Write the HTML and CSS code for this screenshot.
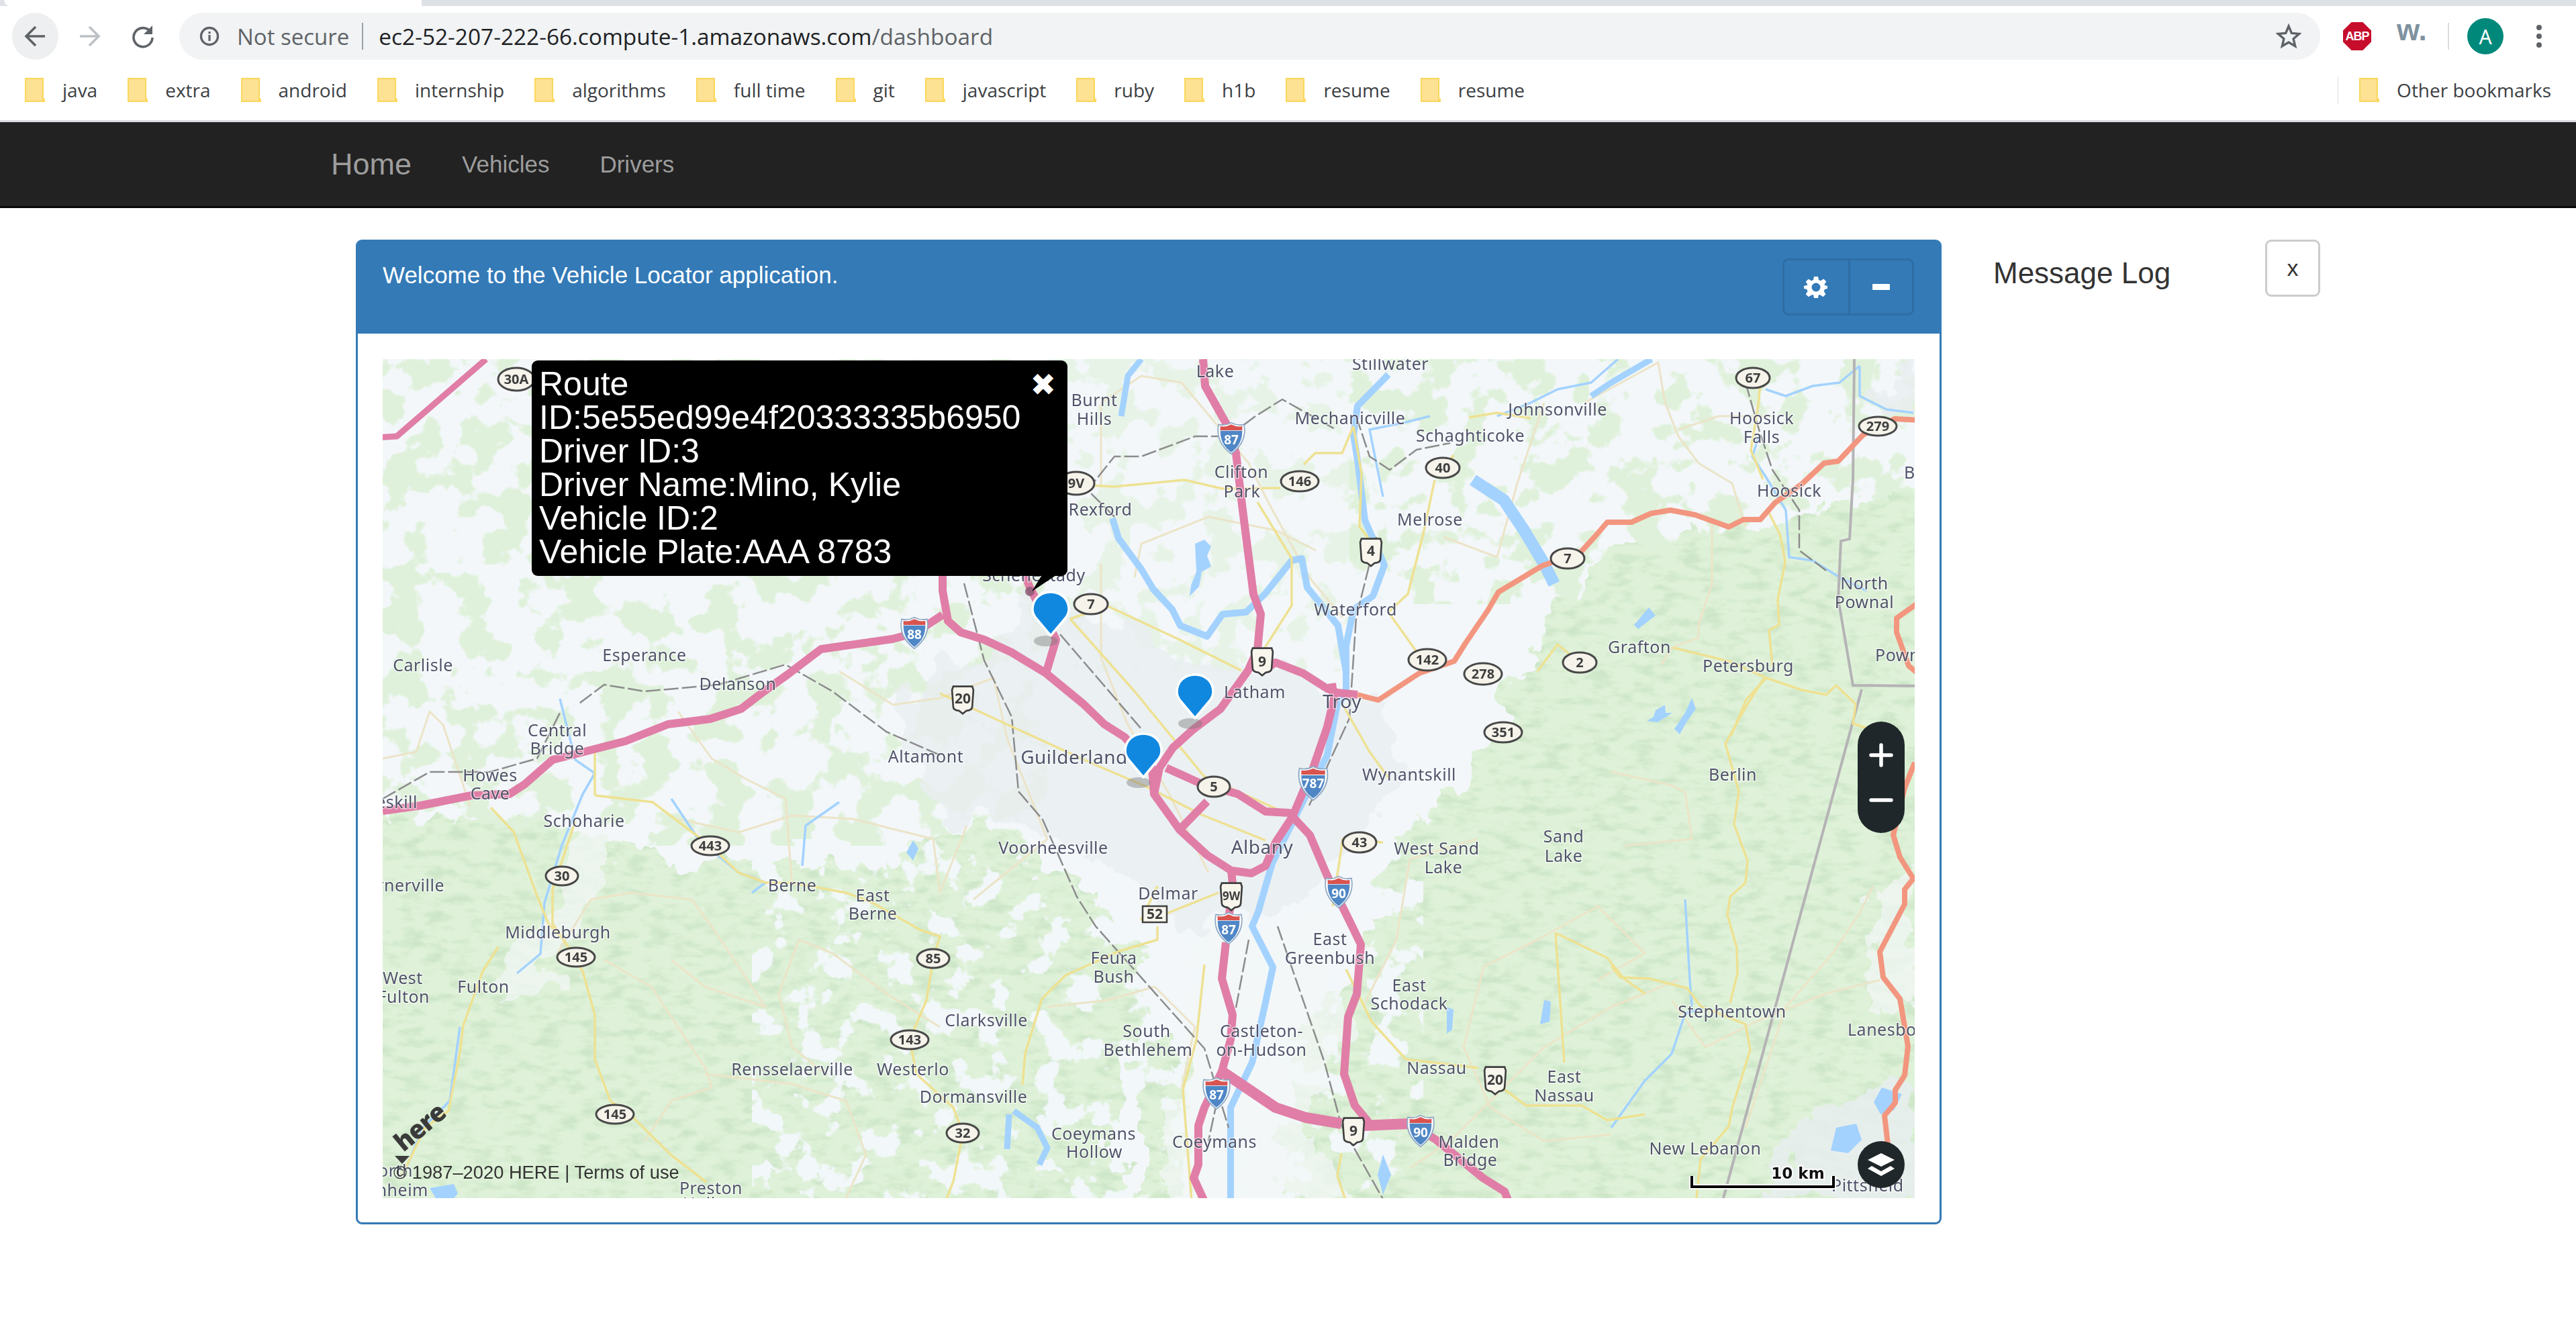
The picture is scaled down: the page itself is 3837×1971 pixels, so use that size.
FILE: index.html
```html
<!DOCTYPE html>
<html lang="en">
<head>
<meta charset="utf-8">
<title>Vehicle Locator</title>
<link rel="stylesheet" href="styles.css">
</head>
<body>
<header class="chrome">
  <div class="tabstrip"><div class="tabstrip-tab"></div><div class="tabstrip-rest"></div></div>
  <div class="toolbar">
    <div class="nav-btn nav-btn-active">
      <svg width="40" height="40" viewBox="0 0 40 40"><path d="M34 20H7M20 6L6 20l14 14" class="ic-stroke"/></svg>
    </div>
    <div class="nav-btn">
      <svg width="40" height="40" viewBox="0 0 40 40"><path d="M6 20h27M20 6l14 14-14 14" class="ic-stroke ic-off"/></svg>
    </div>
    <div class="nav-btn">
      <svg width="40" height="40" viewBox="0 0 40 40"><path d="M31 13A14 14 0 1 0 34 22" class="ic-stroke"/><path d="M34 4v13H21z" class="ic-fill"/></svg>
    </div>
    <div class="omnibox">
      <svg class="info-icon" width="32" height="32" viewBox="0 0 32 32"><circle cx="16" cy="16" r="12.5" class="ic-ring"/><rect x="14.4" y="14" width="3.2" height="9" class="ic-fill"/><rect x="14.4" y="9" width="3.2" height="3.2" class="ic-fill"/></svg>
      <span class="not-secure">Not secure</span>
      <span class="omni-sep"></span>
      <span class="url">ec2-52-207-222-66.compute-1.amazonaws.com<span class="url-path">/dashboard</span></span>
      <svg class="star" width="38" height="38" viewBox="0 0 38 38"><path d="M19 4l4.4 10.4 11.2 1-8.5 7.4 2.6 11L19 28l-9.7 5.8 2.6-11-8.5-7.4 11.2-1z" class="ic-star"/></svg>
    </div>
    <div class="abp"><span>ABP</span></div>
    <div class="wext">w.</div>
    <span class="tool-sep"></span>
    <div class="avatar">A</div>
    <div class="dots"><i></i><i></i><i></i></div>
  </div>
  <div class="bookmarks">
    <a class="bm"><svg class="folder" viewBox="0 0 30 36"><use href="#folder"/></svg>java</a>
    <a class="bm"><svg class="folder" viewBox="0 0 30 36"><use href="#folder"/></svg>extra</a>
    <a class="bm"><svg class="folder" viewBox="0 0 30 36"><use href="#folder"/></svg>android</a>
    <a class="bm"><svg class="folder" viewBox="0 0 30 36"><use href="#folder"/></svg>internship</a>
    <a class="bm"><svg class="folder" viewBox="0 0 30 36"><use href="#folder"/></svg>algorithms</a>
    <a class="bm"><svg class="folder" viewBox="0 0 30 36"><use href="#folder"/></svg>full time</a>
    <a class="bm"><svg class="folder" viewBox="0 0 30 36"><use href="#folder"/></svg>git</a>
    <a class="bm"><svg class="folder" viewBox="0 0 30 36"><use href="#folder"/></svg>javascript</a>
    <a class="bm"><svg class="folder" viewBox="0 0 30 36"><use href="#folder"/></svg>ruby</a>
    <a class="bm"><svg class="folder" viewBox="0 0 30 36"><use href="#folder"/></svg>h1b</a>
    <a class="bm"><svg class="folder" viewBox="0 0 30 36"><use href="#folder"/></svg>resume</a>
    <a class="bm"><svg class="folder" viewBox="0 0 30 36"><use href="#folder"/></svg>resume</a>
    <span class="bm-spacer"></span>
    <span class="bm-sep"></span>
    <a class="bm bm-other"><svg class="folder" viewBox="0 0 30 36"><use href="#folder"/></svg>Other bookmarks</a>
  </div>
</header>

<nav class="navbar">
  <a class="brand">Home</a>
  <a class="nav-link">Vehicles</a>
  <a class="nav-link">Drivers</a>
</nav>

<main class="content">
  <section class="panel">
    <div class="panel-head">
      <div class="panel-title">Welcome to the Vehicle Locator application.</div>
      <div class="btn-group">
        <button class="hbtn hbtn-first">
          <svg width="36" height="36" viewBox="0 0 36 36"><path class="gear" fill-rule="evenodd" d="M15 2h6l1 5 3 1.3 4.300-2.800 4 4-2.800 4.300L31 15l4 1v4l-4 1-1.300 3 2.800 4.300-4 4L25 29.700 22 29l-1 5h-6l-1-5-3 .7-4.300 2.600-4-4L5.500 24 4.300 21 0 20v-4l4.300-1L5.500 14 2.700 9.800l4-4L11 8.300 14 7zM18 11.500a6.500 6.500 0 1 0 0 13 6.500 6.500 0 0 0 0-13z"/></svg>
        </button>
        <button class="hbtn"><span class="minus-bar"></span></button>
      </div>
    </div>
    <div class="panel-body">
      <div class="map">
        <svg class="map-canvas" width="2282" height="1250" viewBox="570 535 2282 1250">
          <defs>
            <symbol id="folder" viewBox="0 0 30 36">
              <path d="M1 1h26v31h3v3H1z" fill="#fde293" stroke="#fbd75b" stroke-width="2"/>
              <path d="M27 27v8" stroke="#fbd75b" stroke-width="2" fill="none"/>
            </symbol>
            <filter id="rough" x="-5%" y="-5%" width="110%" height="110%" color-interpolation-filters="sRGB">
              <feTurbulence type="fractalNoise" baseFrequency="0.018" numOctaves="4" seed="7" result="n"/>
              <feDisplacementMap in="SourceGraphic" in2="n" scale="90" xChannelSelector="R" yChannelSelector="G"/>
            </filter>
            <filter id="patchGreen" x="0" y="0" width="100%" height="100%" color-interpolation-filters="sRGB">
              <feTurbulence type="fractalNoise" baseFrequency="0.019" numOctaves="4" seed="11"/>
              <feColorMatrix values="0 0 0 0 .875  0 0 0 0 .945  0 0 0 0 .855  16 0 0 0 -8.200"/>
              <feComposite in2="SourceAlpha" operator="in"/>
            </filter>
            <filter id="patchWhite" x="0" y="0" width="100%" height="100%" color-interpolation-filters="sRGB">
              <feTurbulence type="fractalNoise" baseFrequency="0.022" numOctaves="4" seed="23"/>
              <feColorMatrix values="0 0 0 0 .95  0 0 0 0 .97  0 0 0 0 .98  16 0 0 0 -9"/>
              <feComposite in2="SourceAlpha" operator="in"/>
            </filter>
            <filter id="hills" x="-5%" y="-5%" width="110%" height="110%" color-interpolation-filters="sRGB">
              <feTurbulence type="fractalNoise" baseFrequency="0.03 0.075" numOctaves="4" seed="3"/>
              <feColorMatrix values="0 0 0 0 .76  0 0 0 0 .87  0 0 0 0 .74  3 0 0 0 -1.350"/>
              <feComposite in2="SourceAlpha" operator="in"/>
            </filter>
            <symbol id="ishield" viewBox="0 0 50 58" overflow="visible">
              <path d="M3 5q11 3 22-3q11 6 22 3q6 30-22 51Q-3 35 3 5z" fill="#fff" stroke="#8fa9c4" stroke-width="2"/>
              <path d="M6 16h38q0 24-19 37Q6 40 6 16z" fill="#4f86c6"/>
              <path d="M6 8q10 2 19-3q9 5 19 3v7H6z" fill="#d9534f"/>
            </symbol>
            <symbol id="ushield" viewBox="0 0 40 52" overflow="visible">
              <path d="M4 3h32l2 6-2 28q0 6-10 7l-6 5-6-5q-10-1-10-7L2 9z" fill="#f7f5ec" stroke="#3f3f3f" stroke-width="3"/>
            </symbol>
            <g id="green-shapes" class="m-green">
              <path d="M500 1225L760 1215 880 1240 1010 1290 1170 1280 1300 1300 1440 1230 1560 1300 1640 1340 1690 1400 1700 1500 1660 1700 1680 1850H500z"/>
              <path d="M2900 715L2630 780 2470 800 2390 820 2320 920 2270 1020 2220 1100 2170 1180 2100 1230 2060 1310 2040 1420 1990 1500 1930 1560 1900 1680 1920 1850H2900z"/>
              <path d="M1700 1540L1760 1560 1780 1850H1700z"/>
              <path d="M500 1120L560 1160 560 1230H500z"/>
            </g>
          </defs>

          <g class="map-base">
            <rect x="570" y="535" width="2282" height="1250" class="m-land"/>
            <path class="m-patchmask" filter="url(#patchGreen)" d="M570 535H1560V1260H570zM2010 535H2852V900H2010z"/>
            <path class="m-patchmask m-sparse" filter="url(#patchGreen)" d="M1560 535H2010V1000H1560z"/>

            <g filter="url(#rough)"><use href="#green-shapes"/></g>
            <g filter="url(#hills)" opacity=".6"><g filter="url(#rough)"><use href="#green-shapes"/></g></g>
            <path class="m-patchmask" filter="url(#patchWhite)" d="M1120 1250H2120V1785H1120z"/>

            <g filter="url(#rough)" class="m-urban">
              <path d="M1330 1040L1480 960 1560 880 1720 960 1880 1000 2060 1040 2100 1170 1990 1280 1950 1340 1780 1390 1650 1290 1540 1240 1440 1225 1350 1150z"/>
              <path d="M2700 1640L2850 1600 2860 1790 2640 1790z"/>
              <path d="M2790 560L2860 540 2860 620 2810 610z"/>
            </g>

            <g class="m-valley" filter="url(#rough)">
              <path d="M850 1220L905 1240 880 1370 800 1470 740 1480 770 1420 840 1340z"/>
              <path d="M1780 1390L1960 1370 2010 1520 1940 1660 2020 1790H1740z"/>
              <path d="M2780 1330L2850 1300 2850 1500 2790 1500z"/>
            </g>

            <g class="m-tan">
              <polyline points="1000,1430 1050,1470 1140,1500 1060,1380 1030,1340 940,1330 880,1340 830,1420"/>
              <polyline points="1440,1230 1400,1330 1390,1250 1270,1220 1180,1215 1100,1240 1010,1220"/>
              <polyline points="1010,1060 1060,1130 1110,1160 1170,1190 1180,1320"/>
              <polyline points="1400,1530 1320,1480 1240,1420 1190,1400 1160,1480 1180,1560 1230,1600"/>
              <polyline points="1050,1600 1180,1615 1260,1640 1290,1720 1260,1785"/>
              <polyline points="900,1430 970,1470 1010,1530 1050,1590 1060,1620 1000,1640 960,1700"/>
              <polyline points="700,1200 660,1080 640,1060 620,1120 570,1130"/>
              <polyline points="1250,1000 1330,1050 1400,1040 1480,1010 1500,1100 1540,1200 1560,1250 1450,1340"/>
              <polyline points="1640,840 1640,980 1680,1080 1740,1180 1800,1300"/>
              <polyline points="1640,725 1640,600 1700,560 1760,570 1860,690 1890,750 1950,860 2000,920"/>
              <polyline points="1690,860 1700,810 1800,770 1900,790 1960,820"/>
              <polyline points="2360,600 2470,540 2480,600 2500,650 2530,690 2580,720 2600,785"/>
              <polyline points="2500,640 2560,620 2640,620"/>
              <polyline points="2550,780 2550,870 2530,930 2530,950 2490,965 2475,990"/>
              <polyline points="2380,1460 2450,1420 2380,1350 2290,1400 2210,1440 2180,1560 2220,1650 2300,1700 2400,1690"/>
              <polyline points="2420,1260 2520,1250 2510,1180 2490,1170 2400,1150"/>
              <polyline points="2600,1680 2660,1500 2730,1420 2770,1360 2790,1320"/>
              <polyline points="2490,1490 2540,1560 2620,1520 2720,1480 2800,1460"/>
              <polyline points="2150,800 2230,830 2260,720 2300,600"/>
              <polyline points="2030,1500 2080,1400 2100,1280 2200,1250"/>
              <polyline points="1560,1500 1650,1490 1720,1470 1780,1530 1760,1620"/>
              <polyline points="2100,1740 2160,1700 2240,1620 2300,1560 2400,1500 2500,1460"/>
            </g>

            <g class="m-river">
              <polyline class="r-wide" points="1657,772 1666,802 1700,848 1718,878 1746,908 1758,932 1798,948 1821,915 1856,912 1884,885 1924,835 1939,832 1947,875 1993,932 2005,1002"/>
              <polyline class="r-wide" points="2068,558 2022,605 2016,648 2022,685 2033,775 2045,802 2062,842 2045,888 2016,908 2005,962 2005,1035 1992,1049 1977,1125 1941,1194 1895,1286 1874,1359 1865,1380 1896,1441 1884,1498 1865,1583 1833,1650 1833,1790"/>
              <polyline class="r-lake" points="2194,715 2240,745 2270,790 2300,840 2315,870"/>
              <polyline class="r-med" points="1510,1655 1545,1680 1560,1710 1548,1735"/>
              <polyline class="r-med" points="1503,1660 1500,1712"/>
              <polyline class="r-thin" points="834,1041 857,1132 886,1152 868,1183 837,1259 811,1345 805,1421 770,1450"/>
              <polyline class="r-thin" points="1000,1190 1040,1250 1100,1300 1140,1315 1120,1330"/>
              <polyline class="r-thin" points="1250,1195 1200,1230 1195,1290"/>
              <polyline class="r-thin" points="685,1530 670,1640 630,1680 605,1740"/>
              <polyline class="r-thin" points="2400,1680 2450,1610 2490,1570 2510,1510 2540,1500"/>
              <polyline class="r-thin" points="2510,1340 2517,1460 2520,1500"/>
              <polyline class="r-thin" points="2620,650 2610,680 2630,710 2660,760 2665,830 2700,835 2740,860 2780,880"/>
              <polyline class="r-thin" points="2630,580 2660,590 2700,575 2740,570 2770,545"/>
              <polyline class="r-thin" points="2770,545 2770,590 2810,610 2850,615"/>
              <polyline class="r-thin" points="2060,740 2040,640 2090,630 2130,620"/>
              <polyline class="r-thin" points="2230,620 2280,600 2320,580 2370,570 2410,535"/>
              <polyline class="r-med" points="2370,590 2400,570 2460,535"/>
              <polyline class="r-med" points="1700,535 1680,560 1670,620"/>
              <path class="r-fill" d="M1780 810l14-6 10 10-6 14 6 16-14 8-4 22-14 14 2-16 8-20zM1350 1270l10-18 8 12-8 18zM2480 1050l-14 8-3 10-10 6 16 2 22-14-10 0zM2803 1620l30 10-12 24-20 6-10-18zM2735 1680l30-6 8 24-20 20-26-4zM2060 1720l12 30-12 30-8-30zM640 1770l36-6 6 14-10 12-20 0zM2456 905l10 12-26 20-6-6zM2520 1040l6 16-14 20-10 18-8-8 16-24z"/>
              <path class="r-fill" d="M2155 1500l10 4-2 30-8 6zM2300 1490l10 2-2 30-14 4z"/>
            </g>

            <g class="m-rail">
              <polyline points="1436,869 1466,984 1507,1068 1517,1179 1553,1221 1604,1336 1632,1380 1737,1498 1794,1562 1830,1680"/>
              <polyline points="1579,945 1701,1087"/>
              <polyline points="1903,1380 1973,1583 1998,1677 2062,1790"/>
              <polyline points="1400,1125 1320,1090 1240,1030 1170,990 1070,1020 960,1030 900,1020 860,1050"/>
              <polyline points="570,1190 640,1150 730,1150 800,1130 835,1060"/>
              <polyline points="1660,770 1620,730 1660,680 1700,680 1780,650 1830,650 1870,620 1910,595 1990,640"/>
              <polyline points="2020,620 2040,680 2070,700 2110,670 2160,660"/>
              <polyline points="1860,1400 1830,1560 1800,1700"/>
              <polyline points="1950,1200 2010,1070 2020,920 2050,800"/>
              <polyline points="2600,570 2620,640 2640,700 2680,760 2680,820 2720,850"/>
            </g>

            <g class="m-line">
              <polyline points="2773,1027 2567,1785"/>
              <polyline points="2762,535 2760,714 2755,803 2742,806 2738,892 2760,1021 2860,1022"/>
            </g>

            <g class="m-yellow">
              <polyline points="1594,922 1650,903 1757,953 1849,999"/>
              <polyline points="1594,922 1690,1030 1793,1156 1910,1209"/>
              <polyline points="1400,1033 1517,1087 1635,1141 1706,1171 1788,1213 1885,1252"/>
              <polyline points="886,1185 972,1195 1058,1260 1100,1300 1140,1315 1180,1315 1260,1330 1300,1345 1370,1385 1400,1395 1390,1428 1380,1490 1355,1549 1365,1600 1420,1650 1434,1688 1420,1760 1410,1785"/>
              <polyline points="731,1203 765,1239 800,1335 817,1376 840,1401"/>
              <polyline points="857,1223 823,1325 823,1376 840,1401 868,1447 886,1512 886,1578 909,1640 943,1665 1000,1721 1052,1761"/>
              <polyline points="742,1411 719,1447 690,1528 685,1568 668,1655 633,1680 599,1751"/>
              <polyline points="886,1120 886,1185"/>
              <polyline points="1620,723 1660,725 1764,715 1821,728 1907,727"/>
              <polyline points="1873,748 1924,832 1924,902 1884,965"/>
              <polyline points="1942,692 1959,675 1999,675 2016,635"/>
              <polyline points="2137,715 2120,795 2097,885 2068,912 2108,968 2126,983"/>
              <polyline points="2165,678 2145,708"/>
              <polyline points="2188,622 2229,615 2280,623"/>
              <polyline points="2016,635 2028,705 2025,785 2045,810"/>
              <polyline points="2655,813 2659,838 2648,892 2650,931 2635,939 2640,992"/>
              <polyline points="2492,965 2575,985 2631,1010 2601,1042 2579,1095"/>
              <polyline points="2631,1010 2684,1028 2720,1035 2735,1021 2764,1049 2760,1078 2782,1085"/>
              <polyline points="2635,764 2651,796 2655,813"/>
              <polyline points="2622,571 2619,603 2608,671 2626,714"/>
              <polyline points="2353,987 2320,960 2290,1000"/>
              <polyline points="2627,1011 2600,1054 2570,1108 2590,1179 2583,1228 2603,1282 2600,1315 2577,1336 2573,1363 2587,1412 2588,1450 2577,1494"/>
              <polyline points="2400,1439 2413,1456 2457,1458 2513,1472 2533,1499 2600,1526 2607,1564 2580,1651 2575,1678 2533,1727 2527,1785"/>
              <polyline points="1724,1380 1724,1400 1667,1417 1587,1453 1552,1488 1527,1569 1523,1616"/>
              <polyline points="2005,1444 2043,1522 2094,1578 2202,1591"/>
              <polyline points="2241,1623 2273,1647 2356,1647 2394,1669 2450,1660"/>
              <polyline points="2317,1390 2330,1583"/>
              <polyline points="2317,1390 2394,1427 2419,1458 2450,1480"/>
              <polyline points="1998,1718 1992,1752 2005,1790"/>
              <polyline points="1794,1437 1782,1549 1762,1623 1775,1790"/>
              <polyline points="1724,1320 1700,1370 1740,1360 1815,1330"/>
              <polyline points="2060,1255 2000,1250 1985,1350"/>
              <polyline points="2069,1160 2040,1120 2000,1050"/>
            </g>

            <g class="m-pink">
              <polyline class="p-thin" points="560,652 591,650 724,535"/>
              <polyline points="1404,840 1404,880 1412,925 1431,942 1466,953 1507,972 1558,1003 1614,1049 1645,1079 1675,1098 1716,1144 1719,1183 1757,1236 1798,1274 1834,1297 1864,1301 1885,1290 1900,1255 1925,1217 1956,1144 1977,1083 1987,1041 1984,1018"/>
              <polyline points="1558,1003 1573,953 1533,873 1527,857"/>
              <polyline points="1792,535 1795,575 1827,632 1841,675 1850,752 1867,885 1878,915 1873,968 1859,999 1818,1056 1777,1087 1747,1114 1727,1144 1719,1183"/>
              <polyline points="1737,1144 1788,1167 1844,1183 1885,1209 1920,1211 1951,1244 1977,1305 2014,1380 2027,1407 2021,1481 2008,1515 2002,1600 2018,1647 2037,1670 2037,1677"/>
              <polyline points="1880,1000 1900,987 1941,1003 1977,1026 1992,1032 2022,1035"/>
              <polyline points="1798,1194 1757,1236"/>
              <polyline points="1834,1297 1836,1317 1831,1362"/>
              <polyline points="1826,1404 1820,1458 1836,1512 1833,1549 1820,1596 1794,1650 1785,1677 1785,1735 1778,1755 1794,1790"/>
              <polyline class="p-wide" points="1820,1596 1900,1650 1945,1665 1998,1674"/>
              <polyline class="p-wide" points="2030,1677 2100,1674"/>
              <polyline points="2100,1674 2139,1698 2209,1755 2241,1775 2247,1790"/>
              <polyline points="570,1208 627,1200 702,1185 759,1183 782,1168 823,1132 874,1119 932,1104 995,1079 1058,1071 1104,1056 1138,1030 1173,1005 1223,967 1329,952 1363,943 1404,916"/>
            </g>
            <g class="m-orange">
              <polyline points="2022,1035 2053,1043 2114,1003 2166,985 2183,958 2217,908 2232,882 2297,843 2355,822 2376,799 2394,778 2430,778 2459,765 2488,760 2525,767 2575,785 2597,774 2622,774 2644,749 2684,721 2717,690 2738,687 2775,648 2822,624 2860,626"/>
              <polyline points="2860,896 2825,921 2825,942 2843,992 2860,1006"/>
              <polyline points="2852,1136 2837,1174 2820,1244 2830,1277 2850,1309 2837,1325 2837,1347 2800,1418 2805,1456 2830,1488 2842,1559 2837,1602 2823,1624 2823,1643 2807,1662 2812,1705"/>
            </g>

            <g class="labels">
              <text x="1810" y="530">Ballston</text>
              <text x="1080" y="535">Amsterdam</text>
              <text x="1810" y="564">Lake</text>
              <text x="2071" y="553">Stillwater</text>
              <text x="1630" y="607">Burnt</text>
              <text x="1630" y="635">Hills</text>
              <text x="2320" y="621">Johnsonville</text>
              <text x="2011" y="634">Mechanicville</text>
              <text x="2190" y="660">Schaghticoke</text>
              <text x="2624" y="634">Hoosick</text>
              <text x="2624" y="662">Falls</text>
              <text x="2665" y="742">Hoosick</text>
              <text x="1849" y="714">Clifton</text>
              <text x="1850" y="743">Park</text>
              <text x="2130" y="785">Melrose</text>
              <text x="1639" y="770">Rexford</text>
              <text x="1540" y="868">Schenectady</text>
              <text x="2019" y="919">Waterford</text>
              <text x="2777" y="880">North</text>
              <text x="2777" y="908">Pownal</text>
              <text class="l-start" x="2793" y="987">Pownal</text>
              <text class="l-start" x="2836" y="715">Bennington</text>
              <text x="2442" y="975">Grafton</text>
              <text x="2604" y="1003">Petersburg</text>
              <text x="630" y="1002">Carlisle</text>
              <text x="960" y="987">Esperance</text>
              <text x="1099" y="1030">Delanson</text>
              <text x="1869" y="1042">Latham</text>
              <text class="l-big" x="1999" y="1057">Troy</text>
              <text class="l-big" x="1600" y="1140">Guilderland</text>
              <text x="1379" y="1138">Altamont</text>
              <text x="2099" y="1165">Wynantskill</text>
              <text x="830" y="1099">Central</text>
              <text x="830" y="1126">Bridge</text>
              <text x="730" y="1166">Howes</text>
              <text x="730" y="1193">Cave</text>
              <text class="l-end" x="622" y="1206">Cobleskill</text>
              <text x="870" y="1234">Schoharie</text>
              <text x="1180" y="1330">Berne</text>
              <text x="1300" y="1345">East</text>
              <text x="1300" y="1372">Berne</text>
              <text class="l-end" x="662" y="1330">Warnerville</text>
              <text x="831" y="1400">Middleburgh</text>
              <text class="l-start" x="570" y="1468">West</text>
              <text class="l-end" x="640" y="1496">Fulton</text>
              <text x="720" y="1481">Fulton</text>
              <text x="1569" y="1274">Voorheesville</text>
              <text class="l-big" x="1880" y="1274">Albany</text>
              <text x="1740" y="1342">Delmar</text>
              <text x="2140" y="1275">West Sand</text>
              <text x="2150" y="1303">Lake</text>
              <text x="2329" y="1257">Sand</text>
              <text x="2329" y="1286">Lake</text>
              <text x="2581" y="1165">Berlin</text>
              <text x="1659" y="1438">Feura</text>
              <text x="1659" y="1466">Bush</text>
              <text x="1981" y="1410">East</text>
              <text x="1981" y="1438">Greenbush</text>
              <text x="2099" y="1479">East</text>
              <text x="2099" y="1506">Schodack</text>
              <text x="1708" y="1547">South</text>
              <text x="1710" y="1575">Bethlehem</text>
              <text x="1879" y="1547">Castleton-</text>
              <text x="1879" y="1575">on-Hudson</text>
              <text x="1469" y="1531">Clarksville</text>
              <text x="1180" y="1604">Rensselaerville</text>
              <text x="1360" y="1604">Westerlo</text>
              <text x="1450" y="1645">Dormansville</text>
              <text x="1629" y="1700">Coeymans</text>
              <text x="1630" y="1727">Hollow</text>
              <text x="1809" y="1712">Coeymans</text>
              <text x="2140" y="1602">Nassau</text>
              <text x="2330" y="1615">East</text>
              <text x="2330" y="1643">Nassau</text>
              <text x="2188" y="1712">Malden</text>
              <text x="2190" y="1739">Bridge</text>
              <text x="2580" y="1518">Stephentown</text>
              <text class="l-start" x="2752" y="1545">Lanesboro</text>
              <text x="2540" y="1722">New Lebanon</text>
              <text class="l-start" x="2728" y="1777">Pittsfield</text>
              <text x="1059" y="1781">Preston</text>
              <text x="1059" y="1804">Hollow</text>
              <text class="l-end" x="615" y="1755">North</text>
              <text class="l-end" x="638" y="1784">Blenheim</text>
            </g>

            <g class="ovals">
              <g><ellipse cx="769" cy="565" rx="27" ry="17"/><text x="769" y="572">30A</text></g>
              <g><ellipse cx="1625" cy="900" rx="25" ry="15"/><text x="1625" y="907">7</text></g>
              <g><ellipse cx="1603" cy="720" rx="27" ry="17"/><text x="1603" y="727">9V</text></g>
              <g><ellipse cx="2126" cy="983" rx="28" ry="16"/><text x="2126" y="990">142</text></g>
              <g><ellipse cx="2209" cy="1004" rx="28" ry="16"/><text x="2209" y="1011">278</text></g>
              <g><ellipse cx="2239" cy="1091" rx="28" ry="15"/><text x="2239" y="1098">351</text></g>
              <g><ellipse cx="2353" cy="987" rx="25" ry="15"/><text x="2353" y="994">2</text></g>
              <g><ellipse cx="2335" cy="832" rx="25" ry="15"/><text x="2335" y="839">7</text></g>
              <g><ellipse cx="2149" cy="697" rx="25" ry="15"/><text x="2149" y="704">40</text></g>
              <g><ellipse cx="1936" cy="717" rx="28" ry="15"/><text x="1936" y="724">146</text></g>
              <g><ellipse cx="2611" cy="563" rx="25" ry="15"/><text x="2611" y="570">67</text></g>
              <g><ellipse cx="2797" cy="635" rx="28" ry="14"/><text x="2797" y="642">279</text></g>
              <g><ellipse cx="1808" cy="1172" rx="24" ry="15"/><text x="1808" y="1179">5</text></g>
              <g><ellipse cx="2025" cy="1255" rx="25" ry="15"/><text x="2025" y="1262">43</text></g>
              <g><ellipse cx="1058" cy="1260" rx="28" ry="14"/><text x="1058" y="1267">443</text></g>
              <g><ellipse cx="837" cy="1305" rx="24" ry="14"/><text x="837" y="1312">30</text></g>
              <g><ellipse cx="858" cy="1426" rx="28" ry="14"/><text x="858" y="1433">145</text></g>
              <g><ellipse cx="1390" cy="1428" rx="24" ry="14"/><text x="1390" y="1435">85</text></g>
              <g><ellipse cx="1355" cy="1549" rx="28" ry="14"/><text x="1355" y="1556">143</text></g>
              <g><ellipse cx="1434" cy="1688" rx="24" ry="14"/><text x="1434" y="1695">32</text></g>
              <g><ellipse cx="916" cy="1660" rx="28" ry="14"/><text x="916" y="1667">145</text></g>
            </g>

            <use href="#ushield" x="1416" y="1020" width="36" height="46"/>
            <use href="#ushield" x="1862" y="963" width="36" height="46"/>
            <use href="#ushield" x="2024" y="800" width="36" height="46"/>
            <use href="#ushield" x="1816" y="1313" width="36" height="46"/>
            <use href="#ushield" x="2209" y="1587" width="36" height="46"/>
            <use href="#ushield" x="1998" y="1663" width="36" height="46"/>
            <rect x="1702" y="1350" width="36" height="24" class="sq52"/>
            <use href="#ishield" x="1340" y="918" width="44" height="50"/>
            <use href="#ishield" x="1812" y="628" width="44" height="50"/>
            <use href="#ishield" x="1931" y="1140" width="50" height="54"/>
            <use href="#ishield" x="1972" y="1304" width="44" height="50"/>
            <use href="#ishield" x="1808" y="1358" width="44" height="50"/>
            <use href="#ishield" x="1790" y="1604" width="44" height="50"/>
            <use href="#ishield" x="2094" y="1660" width="44" height="50"/>
            <g class="shield-nums">
              <text class="w" x="1362" y="952">88</text>
              <text class="w" x="1834" y="662">87</text>
              <text class="w" x="1956" y="1174">787</text>
              <text class="w" x="1994" y="1338">90</text>
              <text class="w" x="1830" y="1392">87</text>
              <text class="w" x="1812" y="1638">87</text>
              <text class="w" x="2116" y="1694">90</text>
              <text x="1434" y="1048">20</text>
              <text x="1880" y="993">9</text>
              <text x="2042" y="828">4</text>
              <text class="s" x="1834" y="1341">9W</text>
              <text x="2227" y="1616">20</text>
              <text x="2016" y="1692">9</text>
              <text x="1720" y="1369">52</text>
            </g>
          </g>

          <g class="pin-shadows">
            <ellipse cx="1558" cy="955" rx="18" ry="8"/>
            <ellipse cx="1773" cy="1078" rx="18" ry="8"/>
            <ellipse cx="1696" cy="1166" rx="18" ry="8"/>
          </g>
          <circle cx="1534" cy="881" r="7" class="popup-dot"/>
          <g class="pins">
            <path d="M1565 947l-21-25q-6-7-6-14c0-16 12-26 27-26s27 10 27 26q0 7-6 14z"/>
            <path d="M1780 1070l-21-25q-6-7-6-14c0-16 12-26 27-26s27 10 27 26q0 7-6 14z"/>
            <path d="M1703 1158l-21-25q-6-7-6-14c0-16 12-26 27-26s27 10 27 26q0 7-6 14z"/>
          </g>
          <path class="tail" d="M1553 855h23l-39 26z"/>
          <g class="here-logo">
            <path d="M588 1722h22l-11 12z"/>
            <text x="0" y="0" transform="translate(601 1717) rotate(-40)">here</text>
          </g>
          <g class="scale">
            <path class="scale-halo" d="M2520 1752v16h211v-16"/>
            <path class="scale-line" d="M2520 1752v16h211v-16"/>
            <text x="2678" y="1756">10 km</text>
          </g>
        </svg>

        <div class="popup">
          <span class="popup-close">✖</span>
          <div>Route ID:5e55ed99e4f20333335b6950</div>
          <div>Driver ID:3</div>
          <div>Driver Name:Mino, Kylie</div>
          <div>Vehicle ID:2</div>
          <div>Vehicle Plate:AAA 8783</div>
        </div>

        <div class="zoom-ctl">
          <svg width="40" height="40" viewBox="0 0 40 40"><path d="M5 20h30M20 5v30" class="zoom-stroke"/></svg>
          <svg width="40" height="40" viewBox="0 0 40 40"><path d="M5 20h30" class="zoom-stroke"/></svg>
        </div>
        <div class="layers-btn">
          <svg width="44" height="36" viewBox="0 0 44 36"><path d="M22 1l20 10-20 10L2 11z" class="layer-fill"/><path d="M8 20l-6 4 20 11 20-11-6-4-14 8z" class="layer-fill"/></svg>
        </div>
        <div class="copyright">© 1987–2020 HERE | Terms of use</div>
      </div>
    </div>
  </section>

  <aside class="log">
    <h4 class="log-title">Message Log</h4>
    <button class="log-close">x</button>
  </aside>
</main>
</body>
</html>
```

FILE: styles.css
```css
* { box-sizing: border-box; }
html, body { margin: 0; padding: 0; background: #fff; }
body { width: 3837px; height: 1971px; overflow: hidden; font-family: "Liberation Sans", Arial, sans-serif; color: #333; }
a { text-decoration: none; }

/* browser chrome */
.chrome { height: 182px; border-bottom: 3px solid #dadce0; background: #fff; }
.tabstrip { display: flex; height: 9px; background: #dee1e6; }
.tabstrip-tab { width: 622px; height: 9px; background: #fff; border-radius: 0 0 0 10px; margin-left: 6px; }
.tabstrip-rest { flex: 1; }
.toolbar { display: flex; align-items: center; height: 70px; margin-top: 10px; padding-left: 18px; }
.nav-btn { width: 69px; height: 70px; margin-right: 11px; display: flex; align-items: center; justify-content: center; border-radius: 35px; }
.nav-btn-active { background: #eeeff0; }
.ic-stroke { fill: none; stroke: #5f6368; stroke-width: 3.6; }
.ic-off { stroke: #bdc1c6; }
.ic-fill { fill: #5f6368; }
.ic-ring { fill: none; stroke: #5f6368; stroke-width: 3.4; }
.ic-star { fill: none; stroke: #5f6368; stroke-width: 3.4; }
.omnibox { display: flex; align-items: center; width: 3189px; height: 70px; margin-left: 9px; padding: 0 28px 0 29px; background: #f1f3f4; border-radius: 35px; font-family: "Open Sans", "Noto Sans", sans-serif; font-size: 33px; }
.info-icon { flex: none; }
.not-secure { margin-left: 25px; color: #5f6368; white-space: nowrap; }
.omni-sep { width: 2px; height: 40px; background: #9aa0a6; margin: 0 23px 0 19px; }
.url { color: #202124; white-space: nowrap; font-size: 33.4px; }
.url-path { color: #5f6368; }
.star { margin-left: auto; }
.abp { width: 42px; height: 42px; margin-left: 34px; background: #c70d2c; clip-path: polygon(30% 0, 70% 0, 100% 30%, 100% 70%, 70% 100%, 30% 100%, 0 70%, 0 30%); display: flex; align-items: center; justify-content: center; color: #fff; font: bold 18px "Liberation Sans", sans-serif; letter-spacing: -1px; }
.wext { width: 42px; margin-left: 38px; margin-top: -18px; font: bold 44px "Liberation Sans", sans-serif; color: #7e929f; }
.tool-sep { width: 2px; height: 40px; background: #dadce0; margin-left: 34px; }
.avatar { width: 54px; height: 54px; margin-left: 27px; border-radius: 50%; background: #00897b; color: #fff; display: flex; align-items: center; justify-content: center; font: 30px "Noto Sans", sans-serif; }
.dots { display: flex; flex-direction: column; gap: 5px; margin-left: 49px; }
.dots i { display: block; width: 8px; height: 8px; border-radius: 50%; background: #5f6368; }

.bookmarks { display: flex; align-items: center; height: 73px; margin-top: 8px; padding-left: 37px; font-family: "Open Sans", "Noto Sans", sans-serif; font-size: 28px; color: #3c4043; }
.bm { display: flex; align-items: center; gap: 26px; margin-right: 45px; white-space: nowrap; color: #3c4043; }
.folder { width: 30px; height: 36px; flex: none; }
.bm-spacer { flex: 1; }
.bm-sep { width: 1px; height: 40px; background: #dadce0; margin-right: 31px; }
.bm-other { margin-right: 37px; }

/* navbar */
.navbar { display: flex; align-items: center; gap: 75px; height: 128px; padding: 1px 0 0 493px; background: #222; border-bottom: 3px solid #080808; }
.brand { font-size: 45px; color: #9d9d9d; }
.nav-link { font-size: 35px; color: #9d9d9d; }

/* page */
.content { display: flex; padding: 47px 0 0 530px; }
.panel { width: 2362px; height: 1467px; border: 3px solid #337ab7; border-radius: 9px; box-shadow: 0 1px 2px rgba(0, 0, 0, .05); background: #fff; }
.panel-head { display: flex; justify-content: space-between; height: 137px; padding: 25px 38px 0 37px; background: #337ab7; color: #fff; }
.panel-title { font-size: 35px; line-height: 50px; }
.btn-group { display: flex; width: 196px; height: 85px; }
.hbtn { display: flex; align-items: center; justify-content: center; width: 99px; height: 85px; padding: 0; background: #337ab7; border: 3px solid #2e6da4; border-radius: 0 9px 9px 0; }
.hbtn-first { border-radius: 9px 0 0 9px; border-right: 0; }
.gear { fill: #fff; }
.minus-bar { display: block; width: 26px; height: 9px; border-radius: 1px; background: #fff; }
.panel-body { padding: 38px 37px; }

/* map */
.map { position: relative; width: 2282px; height: 1250px; overflow: hidden; }
.map-canvas { display: block; }
.map-base { filter: blur(.7px); }
.m-land { fill: #f3f7fa; }
.m-patchmask { fill: #000; }
.m-sparse { opacity: .6; }
.m-green path { fill: #dff2d9; }
.m-urban path { fill: #e9edf0; opacity: .8; }
.m-valley path { fill: #f2f6f6; opacity: .7; }
.m-tan polyline { fill: none; stroke: #ece4c8; stroke-width: 3; stroke-linejoin: round; }
.m-river polyline { fill: none; stroke: #a3d2ff; stroke-linejoin: round; }
.m-river .r-wide { stroke-width: 10; }
.m-river .r-lake { stroke-width: 18; }
.m-river .r-thin { stroke-width: 3.5; }
.m-river .r-med { stroke-width: 9; }
.r-fill { fill: #a3d2ff; }
.m-rail polyline { fill: none; stroke: #8c8c8c; stroke-width: 2.500; stroke-dasharray: 22 5; stroke-linejoin: round; }
.m-line polyline { fill: none; stroke: #b5b3b5; stroke-width: 4; }
.m-yellow polyline { fill: none; stroke: #eee192; stroke-width: 3.500; stroke-linejoin: round; }
.m-pink polyline { fill: none; stroke: #e07ea7; stroke-width: 12; stroke-linejoin: round; }
.m-pink .p-wide { stroke-width: 16; }
.m-pink .p-thin { stroke-width: 9; }
.m-orange polyline { fill: none; stroke: #f3967f; stroke-width: 8; stroke-linejoin: round; }

.labels { transform: translateY(-2px); }
.labels text { font-family: "Noto Sans", sans-serif; font-size: 25px; fill: #51546a; text-anchor: middle; letter-spacing: .5px; paint-order: stroke; stroke: rgba(255, 255, 255, .55); stroke-width: 3px; }
.labels .l-start { text-anchor: start; }
.labels .l-end { text-anchor: end; }
.labels .l-big { font-size: 28px; }

.ovals ellipse { fill: #f5f3ea; stroke: #484848; stroke-width: 3; }
.ovals text { font-family: "Noto Sans", sans-serif; font-weight: 700; font-size: 20px; fill: #3e3e3e; text-anchor: middle; }
.sq52 { fill: #f7f5ec; stroke: #3f3f3f; stroke-width: 2.500; }
.shield-nums text { font-family: "Noto Sans", sans-serif; font-weight: 700; font-size: 21px; fill: #3e3e3e; text-anchor: middle; }
.shield-nums .w { fill: #fff; font-size: 19px; }
.shield-nums .s { font-size: 17px; }

.pin-shadows ellipse { fill: #777; opacity: .42; }
.popup-dot { fill: #8a5a74; opacity: .85; }
.pins path { fill: #1188e0; stroke: #fff; stroke-width: 3.500; stroke-linejoin: round; }
.tail { fill: #000; }
.here-logo path { fill: #3d3d3d; }
.here-logo text { font-family: "Open Sans", sans-serif; font-weight: 800; font-size: 38px; letter-spacing: -1px; fill: #3a3a3a; }
.scale-halo { fill: none; stroke: #fff; stroke-width: 8; }
.scale-line { fill: none; stroke: #000; stroke-width: 4; }
.scale text { font-family: "DejaVu Sans", sans-serif; font-weight: 700; font-size: 23px; fill: #111; text-anchor: middle; paint-order: stroke; stroke: #fff; stroke-width: 4px; }

.popup { position: absolute; left: 222px; top: 2px; width: 798px; height: 321px; padding: 10px 11px 11px; background: #000; border-radius: 9px; color: #fff; font-size: 50px; line-height: 50px; }
.popup-close { position: absolute; top: 11px; right: 17px; font: 46px/50px "DejaVu Sans", sans-serif; }
.zoom-ctl { position: absolute; left: 2197px; top: 540px; display: flex; flex-direction: column; align-items: center; justify-content: center; gap: 27px; width: 70px; height: 166px; background: #1f272a; border-radius: 35px; }
.zoom-stroke { fill: none; stroke: #fff; stroke-width: 5.500; stroke-linecap: round; }
.layers-btn { position: absolute; left: 2197px; top: 1165px; display: flex; align-items: center; justify-content: center; width: 70px; height: 70px; background: #1f272a; border-radius: 50%; }
.layer-fill { fill: #fff; }
.copyright { position: absolute; left: 16px; top: 1195px; font-size: 27.3px; line-height: 34px; color: #333; white-space: nowrap; }

/* sidebar */
.log { display: flex; justify-content: space-between; align-items: flex-start; width: 487px; margin-left: 77px; }
.log-title { margin: 26px 0 0; font-weight: 400; font-size: 44px; line-height: 48px; color: #333; }
.log-close { width: 82px; height: 85px; padding: 0; background: #fff; border: 3px solid #ccc; border-radius: 9px; font: 34px "Liberation Sans", sans-serif; color: #333; }
```
